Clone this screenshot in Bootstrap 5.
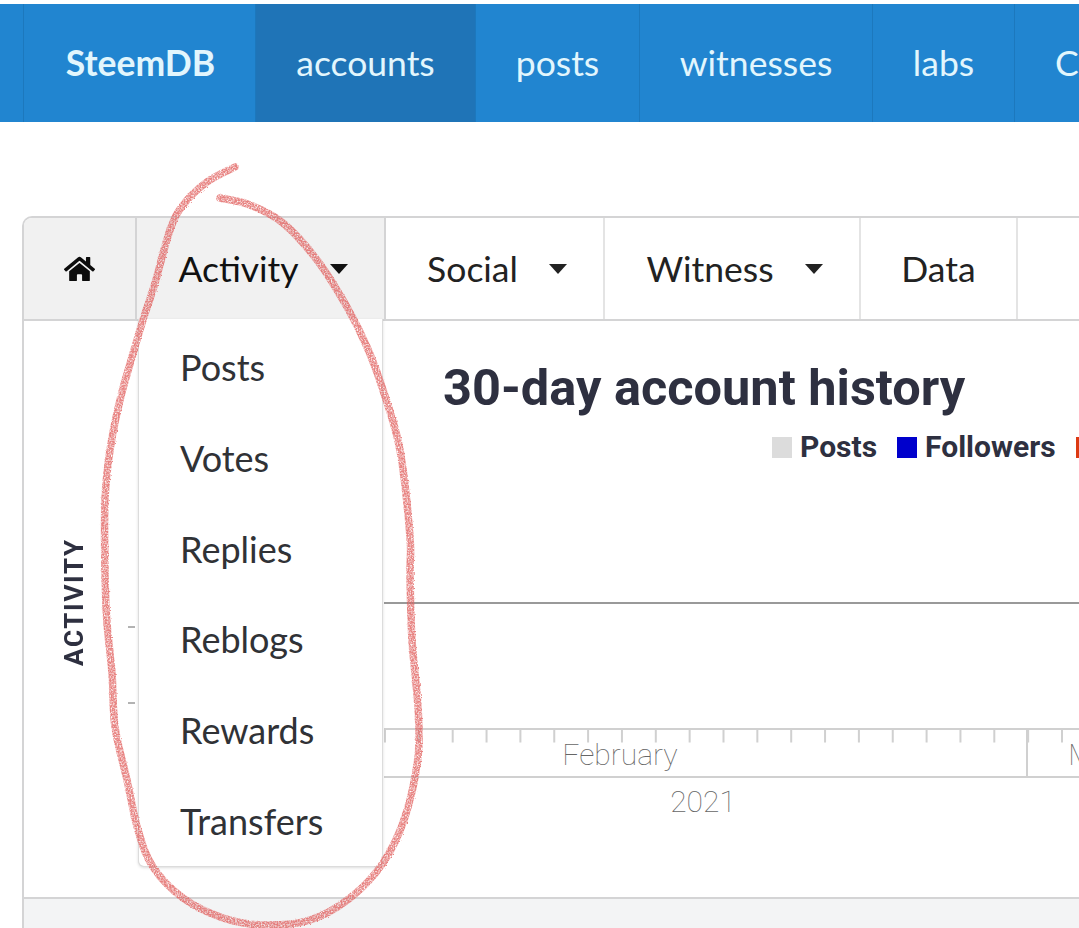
<!DOCTYPE html>
<html lang="en">
<head>
    <meta charset="UTF-8">
    <meta name="viewport" content="width=device-width, initial-scale=1.0">
    <title>SteemDB</title>
    <link href="https://cdn.jsdelivr.net/npm/bootstrap@5.3.0/dist/css/bootstrap.min.css" rel="stylesheet">
    <style>
        html, body {
            height: 928px;
            overflow: hidden;
        }
        body {
            background-color: #fff;
            font-family: "Lato", "Liberation Sans", sans-serif;
            padding-top: 4px;
            position: relative;
        }
        .site-bar {
            background-color: #2185d0;
            height: 118px;
            flex-wrap: nowrap;
            padding-left: 23px;
        }
        .site-bar .nav-link {
            color: #e2f6fd;
            font-size: 35.5px;
            height: 118px;
            display: flex;
            align-items: center;
            justify-content: center;
            border-left: 1px solid #1c78bd;
        }
        .site-bar .brand-link { width: 232px; font-weight: 700; padding-left: 18px; }
        .site-bar .accounts-link { width: 220px; background-color: #1f74b7; }
        .site-bar .posts-link { width: 164px; }
        .site-bar .witnesses-link { width: 233px; }
        .site-bar .labs-link { width: 142px; }
        .site-bar .more-link { width: 120px; justify-content: flex-start; padding-left: 40px; }

        .panel-box {
            width: 1500px;
            margin: 94px 0 0 22px;
            border: 2px solid #d4d4d5;
            border-radius: 10px 0 0 0;
            border-bottom: 0;
        }
        .tab-row {
            height: 103px;
            border-bottom: 2px solid #d4d4d5;
            flex-wrap: nowrap;
        }
        .tab-row .nav-link {
            color: #222;
            font-size: 35.5px;
            height: 101px;
            display: flex;
            align-items: center;
            justify-content: center;
            border-right: 2px solid #e4e4e4;
            padding: 0;
        }
        .tab-row .dropdown-toggle { padding-left: 5px; }
        .tab-row .dropdown-toggle::after {
            border-top: 10px solid currentColor;
            border-left: 9px solid transparent;
            border-right: 9px solid transparent;
            border-bottom: 0;
            margin-left: 31px;
            vertical-align: 0;
        }
        .tab-row .is-open { background-color: #f1f1f1; color: #111; }
        .tab-home { width: 113px; border-top-left-radius: 8px; border-right-color: #d4d4d5 !important; }
        .tab-home svg { width: 31px; height: 28px; fill: #0c0c0c; }
        .tab-activity { width: 249px; border-right-color: #d4d4d5 !important; }
        .tab-social { width: 219px; }
        .tab-witness { width: 256px; }
        .tab-data { width: 157px; }
        .tab-blank { width: 200px; }

        .activity-menu {
            left: 1px;
            top: 100%;
            width: 245px;
            padding: 3px 0 0;
            margin: 0 !important;
            border: 1px solid #dcdcdc;
            border-top: 0;
            border-radius: 0 0 6px 6px;
            box-shadow: 0 1px 3px rgba(0, 0, 0, .14);
            font-size: 36px;
        }
        .activity-menu .dropdown-item {
            height: 90.7px;
            display: flex;
            align-items: center;
            padding: 0 0 0 41px;
            color: #303236;
        }

        .chart-wrap { height: 578px; border-bottom: 2px solid #d4d4d5; }
        .axis-name {
            width: 100px;
            writing-mode: vertical-rl;
            transform: rotate(180deg);
            font-family: "Roboto", "Liberation Sans", sans-serif;
            font-weight: 700;
            font-size: 26px;
            letter-spacing: 1.7px;
            line-height: 30px;
            color: #2e3040;
            text-align: center;
            padding-top: 13px;
            padding-right: 35px;
        }
        .chart-body {
            font-family: "Roboto", "Liberation Sans", sans-serif;
            color: #2e3040;
        }
        .chart-title {
            font-size: 50.5px;
            font-weight: 700;
            line-height: 54px;
            margin: 40px 0 0 319px;
            white-space: nowrap;
        }
        .chart-legend {
            font-size: 30px;
            font-weight: 700;
            line-height: 32px;
            margin: 16px 0 0 648px;
            white-space: nowrap;
        }
        .legend-swatch { width: 20px; height: 21px; margin-right: 8px; }
        .legend-text { margin-right: 20px; }
        .chart-svg { display: block; margin-top: 18px; }
        .chart-svg text {
            font-family: "Roboto", "Liberation Sans", sans-serif;
            font-weight: 100;
            font-size: 30px;
            fill: #666;
            text-anchor: middle;
        }
        .page-foot { height: 60px; background-color: #f3f4f5; width: 1500px; margin-left: 22px; border-left: 2px solid #d4d4d5; }
        .pen-mark { position: absolute; left: 0; top: 0; z-index: 1100; pointer-events: none; opacity: .75; }
    </style>
</head>
<body>
    <ul class="nav site-bar">
        <li class="nav-item"><a class="nav-link brand-link" href="#">SteemDB</a></li>
        <li class="nav-item"><a class="nav-link accounts-link" href="#">accounts</a></li>
        <li class="nav-item"><a class="nav-link posts-link" href="#">posts</a></li>
        <li class="nav-item"><a class="nav-link witnesses-link" href="#">witnesses</a></li>
        <li class="nav-item"><a class="nav-link labs-link" href="#">labs</a></li>
        <li class="nav-item"><a class="nav-link more-link" href="#">Cr</a></li>
    </ul>

    <div class="panel-box">
        <ul class="nav tab-row">
            <li class="nav-item">
                <a class="nav-link tab-home is-open" href="#" aria-label="Home">
                    <svg viewBox="0 0 576 512"><path d="M280.37 148.26L96 300.11V464a16 16 0 0 0 16 16l112.06-.29a16 16 0 0 0 15.92-16V368a16 16 0 0 1 16-16h64a16 16 0 0 1 16 16v95.64a16 16 0 0 0 16 16.05L464 480a16 16 0 0 0 16-16V300L295.67 148.26a12.19 12.19 0 0 0-15.3 0zM571.6 251.47L488 182.56V44.05a12 12 0 0 0-12-12h-56a12 12 0 0 0-12 12v72.61L318.47 43a48 48 0 0 0-61 0L4.34 251.47a12 12 0 0 0-1.6 16.9l25.5 31A12 12 0 0 0 45.15 301l235.22-193.74a12.19 12.19 0 0 1 15.3 0L530.9 301a12 12 0 0 0 16.9-1.6l25.5-31a12 12 0 0 0-1.7-16.93z"/></svg>
                </a>
            </li>
            <li class="nav-item dropdown">
                <a class="nav-link dropdown-toggle tab-activity is-open" href="#">Activity</a>
                <ul class="dropdown-menu show activity-menu">
                    <li><a class="dropdown-item" href="#">Posts</a></li>
                    <li><a class="dropdown-item" href="#">Votes</a></li>
                    <li><a class="dropdown-item" href="#">Replies</a></li>
                    <li><a class="dropdown-item" href="#">Reblogs</a></li>
                    <li><a class="dropdown-item" href="#">Rewards</a></li>
                    <li><a class="dropdown-item" href="#">Transfers</a></li>
                </ul>
            </li>
            <li class="nav-item"><a class="nav-link dropdown-toggle tab-social" href="#">Social</a></li>
            <li class="nav-item"><a class="nav-link dropdown-toggle tab-witness" href="#">Witness</a></li>
            <li class="nav-item"><a class="nav-link tab-data" href="#">Data</a></li>
            <li class="nav-item"><span class="nav-link tab-blank"></span></li>
        </ul>

        <div class="chart-wrap d-flex">
            <div class="axis-name">ACTIVITY</div>
            <div class="chart-body flex-grow-1">
                <h2 class="chart-title">30-day account history</h2>
                <div class="chart-legend d-flex align-items-center">
                    <span class="legend-swatch" style="background-color:#dcdcdc"></span>
                    <span class="legend-text">Posts</span>
                    <span class="legend-swatch" style="background-color:#0000cc"></span>
                    <span class="legend-text">Followers</span>
                    <span class="legend-swatch" style="background-color:#dc3912"></span>
                </div>
                <svg class="chart-svg" width="1200" height="420">
                    <line x1="4" x2="11" y1="146" y2="146" stroke="#666" stroke-width="1"/>
                    <line x1="4" x2="11" y1="222" y2="222" stroke="#666" stroke-width="1"/>
                    <line x1="260" x2="1200" y1="122" y2="122" stroke="#999" stroke-width="2"/>
                    <line x1="260" x2="1200" y1="248" y2="248" stroke="#d0d0d0" stroke-width="2"/>
                    <line x1="260" x2="1200" y1="296" y2="296" stroke="#d0d0d0" stroke-width="2"/>
                    <line x1="260" x2="1200" y1="255" y2="255" stroke="#d0d0d0" stroke-width="13" stroke-dasharray="2 31.85"/>
                    <line x1="903" x2="903" y1="248" y2="296" stroke="#d0d0d0" stroke-width="2"/>
                    <text x="496" y="284">February</text>
                    <text x="957" y="284">M</text>
                    <text x="579" y="331">2021</text>
                </svg>
            </div>
        </div>
    </div>
    <div class="page-foot"></div>

    <svg class="pen-mark" width="1079" height="928">
        <defs>
            <filter id="pencil" x="-5%" y="-5%" width="110%" height="110%">
                <feTurbulence type="fractalNoise" baseFrequency="0.7" numOctaves="2" seed="4" result="grain"/>
                <feDisplacementMap in="SourceGraphic" in2="grain" scale="2.5" result="rough"/>
                <feColorMatrix in="grain" type="matrix" values="0 0 0 0 0  0 0 0 0 0  0 0 0 0 0  0 0 0 -2.2 1.85" result="holes"/>
                <feComposite in="rough" in2="holes" operator="in"/>
                <feGaussianBlur stdDeviation="0.6"/>
            </filter>
        </defs>
        <path id="penStroke" fill="none" stroke="#e05a58" stroke-width="7.5" stroke-linecap="round" filter="url(#pencil)"/>
    </svg>

    <script>
        // the hand drawn loop round the menu, smoothed through traced points
        const pts = [[235,167],[207,182],[183,205],[170,230],[155,283],[143,320],[132,357],[120,400],[110,450],[105,500],[105,573],[107,623],[112,673],[115,727],[127,780],[138,830],[153,867],[183,898],[223,918],[263,925],[310,920],[350,898],[383,863],[405,817],[418,757],[418,707],[412,640],[410,573],[410,537],[400,450],[383,390],[367,347],[347,307],[317,260],[283,223],[250,205],[220,198]];
        let d = `M${pts[0][0]} ${pts[0][1]}`;
        for (let i = 0; i < pts.length - 1; i++) {
            const p0 = pts[i - 1] || pts[i], p1 = pts[i], p2 = pts[i + 1], p3 = pts[i + 2] || p2;
            d += ` C${p1[0] + (p2[0] - p0[0]) / 6} ${p1[1] + (p2[1] - p0[1]) / 6} ${p2[0] - (p3[0] - p1[0]) / 6} ${p2[1] - (p3[1] - p1[1]) / 6} ${p2[0]} ${p2[1]}`;
        }
        document.getElementById('penStroke').setAttribute('d', d);
    </script>
    <script src="https://cdn.jsdelivr.net/npm/bootstrap@5.3.0/dist/js/bootstrap.bundle.min.js"></script>
</body>
</html>
